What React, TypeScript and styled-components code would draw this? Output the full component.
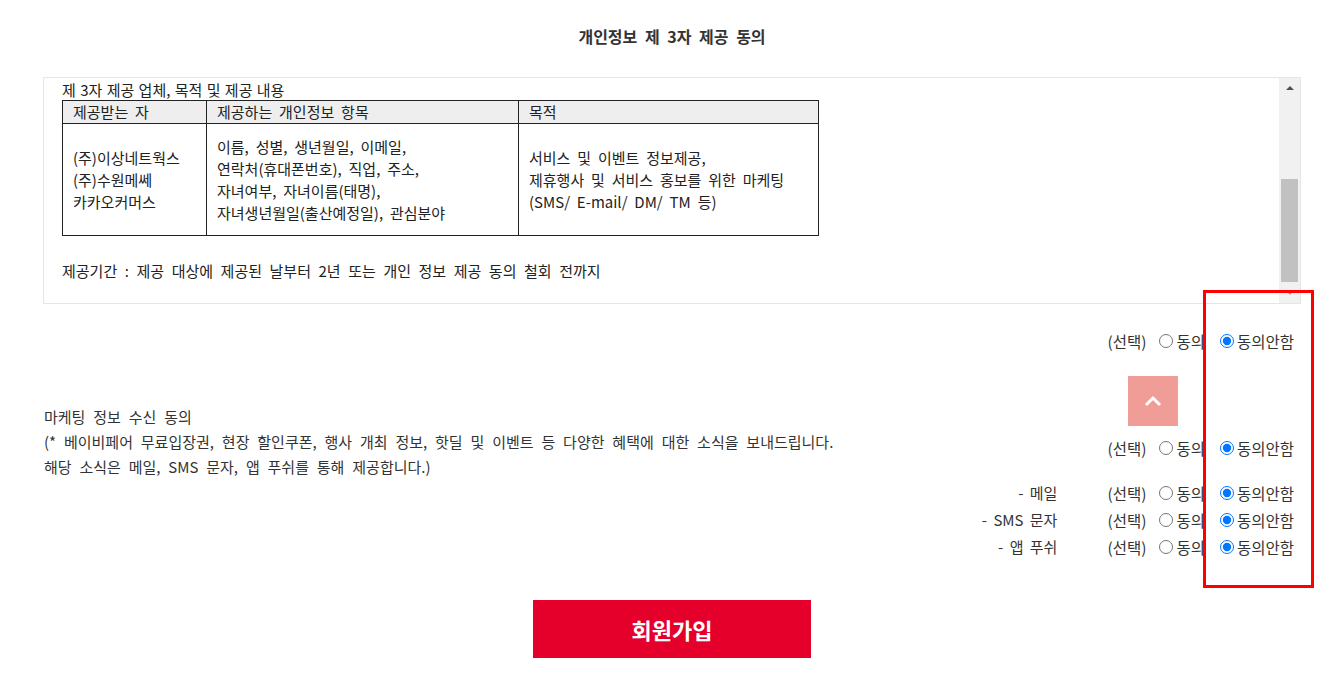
import React from 'react';
import styled, { createGlobalStyle } from 'styled-components';

const Global = createGlobalStyle`
  html, body { margin: 0; padding: 0; background: #fff; }
  body { font-family: "Noto Sans CJK KR", "Noto Sans", sans-serif; color: #333; }
  * { box-sizing: border-box; }
`;

const Wrapper = styled.div`
  position: relative;
  width: 1344px;
  min-height: 678px;
`;

const Page = styled.div`
  width: 1258px;
  margin-left: 43px;
  display: flex;
  flex-direction: column;
`;

const Title = styled.h2`
  margin: 0;
  height: 77px;
  padding-top: 25px;
  text-align: center;
  font-size: 16px;
  font-weight: 700;
  line-height: 22px;
  word-spacing: 4px;
  color: #333;
`;

const TermsBox = styled.div`
  height: 227px;
  border: 1px solid #e6e6e6;
  display: flex;
`;

const TermsContent = styled.div`
  flex: 1;
  overflow: hidden;
  padding: 2px 18px 0;
  font-size: 15px;
  word-spacing: 3.5px;
  color: #222;
`;

const Caption = styled.div`
  line-height: 20px;
  word-spacing: 1px;
`;

const Table = styled.table`
  border-collapse: collapse;
  width: 756px;
  table-layout: fixed;
  border: 1px solid #222;
`;

const Th = styled.th`
  background: #eeeeee;
  border: 1px solid #222;
  height: 23px;
  padding: 0 10px;
  font-weight: 400;
  text-align: left;
  line-height: 20px;
`;

const Td = styled.td`
  border: 1px solid #222;
  height: 112px;
  padding: 0 10px;
  vertical-align: middle;
  line-height: 22px;
`;

const Period = styled.p`
  margin: 25px 0 0;
  line-height: 20px;
  word-spacing: 4.2px;
`;

const ScrollTrack = styled.div`
  width: 21px;
  background: #f1f1f1;
  display: flex;
  flex-direction: column;
`;

const ScrollArrow = styled.div<{ $dir: 'up' | 'down' }>`
  height: 20px;
  display: flex;
  align-items: center;
  justify-content: center;
  &::before {
    content: '';
    width: 0;
    height: 0;
    border-left: 4px solid transparent;
    border-right: 4px solid transparent;
    ${(p) =>
      p.$dir === 'up'
        ? 'border-bottom: 4px solid #505050;'
        : 'border-top: 4px solid #a8a8a8;'}
  }
`;

const ScrollRail = styled.div`
  flex: 1;
  display: flex;
  flex-direction: column;
`;

const ScrollThumb = styled.div`
  margin: 81px 2px 0;
  height: 103px;
  background: #c1c1c1;
`;

const ConsentRow = styled.div<{ $top?: number; $height?: number }>`
  display: flex;
  justify-content: flex-end;
  align-items: center;
  height: ${(p) => p.$height ?? 20}px;
  margin-top: ${(p) => p.$top ?? 0}px;
`;

const RadioGroup = styled.div`
  display: flex;
  align-items: center;
  height: 20px;
  font-size: 15.5px;
  color: #333;
  padding-right: 7px;
`;

const Optional = styled.span`
  line-height: 20px;
`;

const RadioLabel = styled.label<{ $gap: number }>`
  display: flex;
  align-items: center;
  margin-left: ${(p) => p.$gap}px;
  line-height: 20px;
  input {
    margin: 0 3px 0 0;
    width: 14px;
    height: 14px;
  }
`;

const MarketingRow = styled.div`
  display: flex;
  justify-content: space-between;
  align-items: flex-start;
  margin-top: 53px;
`;

const MarketingText = styled.div`
  padding-left: 1px;
  font-size: 15px;
  line-height: 25px;
  word-spacing: 4.5px;
  color: #333;
`;

const SubLabel = styled.span`
  margin-right: 50px;
  font-size: 15px;
  color: #333;
  line-height: 20px;
  word-spacing: 3px;
`;

const SubmitButton = styled.button`
  align-self: center;
  margin-top: 40px;
  width: 278px;
  height: 58px;
  border: none;
  background: #e4002b;
  color: #fff;
  font-family: "Noto Sans CJK KR", sans-serif;
  font-size: 22px;
  font-weight: 700;
  cursor: pointer;
`;

const TopButton = styled.button`
  position: absolute;
  left: 1128px;
  top: 376px;
  width: 50px;
  height: 50px;
  border: none;
  padding: 0;
  background: #f09c97;
  display: flex;
  align-items: center;
  justify-content: center;
`;

const Highlight = styled.div`
  position: absolute;
  left: 1203px;
  top: 290px;
  width: 111px;
  height: 298px;
  border: 3px solid #f00;
  pointer-events: none;
`;

type ChoiceProps = { name: string };

const Choice: React.FC<ChoiceProps> = ({ name }) => (
  <RadioGroup>
    <Optional>(선택)</Optional>
    <RadioLabel $gap={13}>
      <input type="radio" name={name} />
      동의
    </RadioLabel>
    <RadioLabel $gap={15}>
      <input type="radio" name={name} defaultChecked />
      동의안함
    </RadioLabel>
  </RadioGroup>
);

const subItems = [
  { key: 'mail', label: '- 메일' },
  { key: 'sms', label: '- SMS 문자' },
  { key: 'push', label: '- 앱 푸쉬' },
];

export default function App() {
  return (
    <Wrapper>
      <Global />
      <Page>
        <Title>개인정보 제 3자 제공 동의</Title>
        <TermsBox>
          <TermsContent>
            <Caption>제 3자 제공 업체, 목적 및 제공 내용</Caption>
            <Table>
              <colgroup>
                <col style={{ width: 144 }} />
                <col style={{ width: 312 }} />
                <col style={{ width: 300 }} />
              </colgroup>
              <thead>
                <tr>
                  <Th>제공받는 자</Th>
                  <Th>제공하는 개인정보 항목</Th>
                  <Th>목적</Th>
                </tr>
              </thead>
              <tbody>
                <tr>
                  <Td>
                    (주)이상네트웍스
                    <br />
                    (주)수원메쎄
                    <br />
                    카카오커머스
                  </Td>
                  <Td>
                    이름, 성별, 생년월일, 이메일,
                    <br />
                    연락처(휴대폰번호), 직업, 주소,
                    <br />
                    자녀여부, 자녀이름(태명),
                    <br />
                    자녀생년월일(출산예정일), 관심분야
                  </Td>
                  <Td>
                    서비스 및 이벤트 정보제공,
                    <br />
                    제휴행사 및 서비스 홍보를 위한 마케팅
                    <br />
                    (SMS/ E-mail/ DM/ TM 등)
                  </Td>
                </tr>
              </tbody>
            </Table>
            <Period>제공기간 : 제공 대상에 제공된 날부터 2년 또는 개인 정보 제공 동의 철회 전까지</Period>
          </TermsContent>
          <ScrollTrack>
            <ScrollArrow $dir="up" />
            <ScrollRail>
              <ScrollThumb />
            </ScrollRail>
            <ScrollArrow $dir="down" />
          </ScrollTrack>
        </TermsBox>

        <ConsentRow $top={27}>
          <Choice name="thirdParty" />
        </ConsentRow>

        <MarketingRow>
          <MarketingText>
            마케팅 정보 수신 동의
            <br />
            (* 베이비페어 무료입장권, 현장 할인쿠폰, 행사 개최 정보, 핫딜 및 이벤트 등 다양한 혜택에 대한 소식을 보내드립니다.
            <br />
            해당 소식은 메일, SMS 문자, 앱 푸쉬를 통해 제공합니다.)
          </MarketingText>
          <ConsentRow $top={34}>
            <Choice name="marketing" />
          </ConsentRow>
        </MarketingRow>

        {subItems.map((item) => (
          <ConsentRow key={item.key} $height={27}>
            <SubLabel>{item.label}</SubLabel>
            <Choice name={item.key} />
          </ConsentRow>
        ))}

        <SubmitButton type="button">회원가입</SubmitButton>
      </Page>

      <TopButton type="button" aria-label="맨 위로">
        <svg width="20" height="12" viewBox="0 0 20 12">
          <polyline points="3,10 10,3 17,10" fill="none" stroke="#fff" strokeWidth="3" />
        </svg>
      </TopButton>
      <Highlight />
    </Wrapper>
  );
}
